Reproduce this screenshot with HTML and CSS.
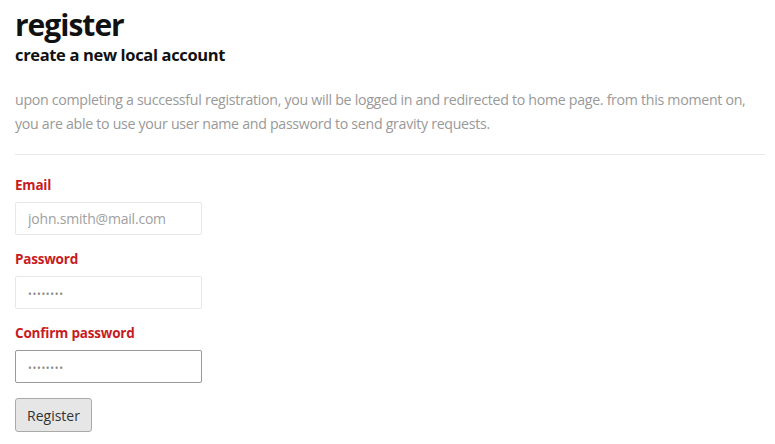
FILE: index.html
```html
<!DOCTYPE html>
<html>
<head>
<meta charset="utf-8">
<link rel="stylesheet" href="styles.css">
</head>
<body>
<main class="page">
  <h1 class="title">register</h1>
  <h2 class="subtitle">create a new local account</h2>
  <p class="intro">upon completing a successful registration, you will be logged in and redirected to home page. from this moment on, you are able to use your user name and password to send gravity requests.</p>
  <hr class="divider">
  <form class="form">
    <div class="field">
      <label class="label">Email</label>
      <input class="input" type="text" placeholder="john.smith@mail.com">
    </div>
    <div class="field">
      <label class="label">Password</label>
      <input class="input dots" type="text" placeholder="••••••••">
    </div>
    <div class="field">
      <label class="label">Confirm password</label>
      <input class="input dots focused" type="text" placeholder="••••••••">
    </div>
    <div class="actions">
      <button class="button" type="button">Register</button>
    </div>
  </form>
</main>
</body>
</html>
```
FILE: styles.css
```css
* { box-sizing: border-box; }
html, body { margin: 0; padding: 0; background: #fff; }
body {
  font-family: "Open Sans", "Noto Sans", sans-serif;
  color: #111;
}
.page {
  padding: 6px 10px 0 15px;
}
.title {
  margin: 0;
  font-size: 30px;
  line-height: 38px;
  font-weight: 700;
  letter-spacing: -1px;
}
.subtitle {
  margin: 0;
  font-size: 16.5px;
  line-height: 22px;
  font-weight: 700;
  letter-spacing: -0.35px;
}
.intro {
  margin: 22px 0 0;
  font-size: 14.2px;
  line-height: 24px;
  color: #999;
  letter-spacing: -0.3px;
}
.divider {
  margin: 18px 0 0;
  border: 0;
  border-top: 1px solid #e9e9e9;
  height: 0;
}
.form {
  display: flex;
  flex-direction: column;
  padding-top: 20px;
}
.field {
  display: flex;
  flex-direction: column;
  margin-bottom: 14px;
}
.label {
  color: #c81b1f;
  font-weight: 700;
  font-size: 13.5px;
  line-height: 20px;
  margin-bottom: 7px;
  letter-spacing: -0.2px;
}
.input {
  width: 187px;
  height: 33px;
  border: 1px solid #e8e8e8;
  border-radius: 2px;
  padding: 0 12px;
  font-family: inherit;
  font-size: 14px;
  color: #333;
  background: #fff;
  outline: none;
}
.input::placeholder { color: #a0a0a0; letter-spacing: -0.2px; }
.dots::placeholder { color: #888; font-size: 10px; letter-spacing: 0.7px; }
.focused { border-color: #999; }
.actions { display: flex; padding-top: 1px; }
.button {
  width: 77px;
  height: 34px;
  background: #e6e6e6;
  border: 1px solid #aaa;
  border-radius: 3px;
  font-family: inherit;
  font-size: 14px;
  color: #333;
  padding: 0;
}
```
